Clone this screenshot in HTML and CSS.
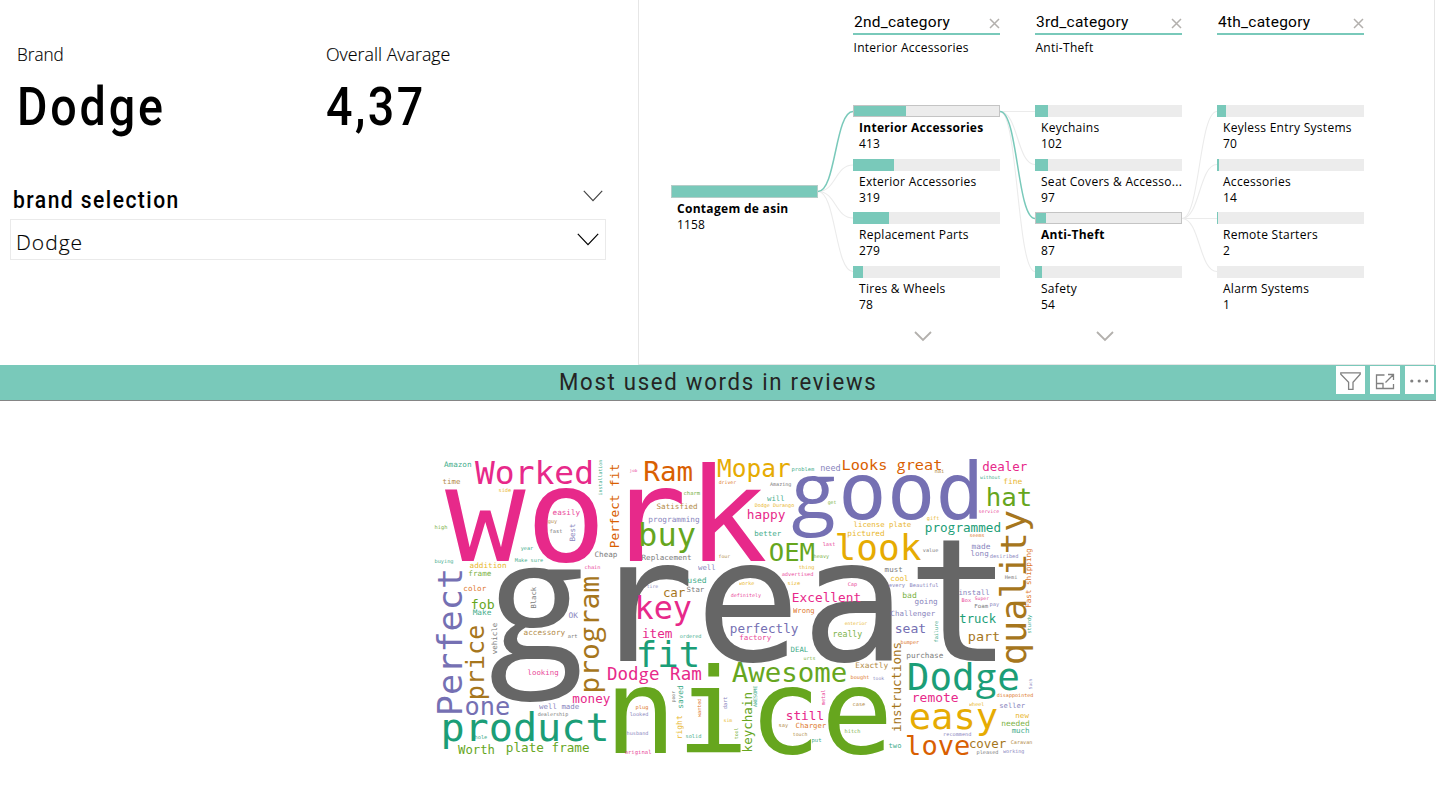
FILE: index.html
```html
<!DOCTYPE html>
<html lang="en">
<head>
<meta charset="utf-8">
<title>Brand reviews</title>
<link rel="stylesheet" href="styles.css">
</head>
<body>
<main class="page">
  <section class="top">
    <div class="summary">
      <div class="cards">
        <div class="card"><div class="card-label"><span class="fit-brand">Brand</span></div><div class="card-value">Dodge</div></div>
        <div class="card"><div class="card-label"><span class="fit-overall">Overall Avarage</span></div><div class="card-value number">4,37</div></div>
      </div>
      <div class="slicer">
        <div class="slicer-head"><span class="slicer-title">brand selection</span>
          <svg class="chev" width="20" height="12" viewBox="0 0 20 12"><path d="M.8.8 10 10.6 19.2.8"/></svg></div>
        <div class="slicer-box"><span class="slicer-value">Dodge</span>
          <svg class="chev dark" width="22" height="13" viewBox="0 0 22 13"><path d="M.8.8 11 11.6 21.2.8"/></svg></div>
      </div>
    </div>
    <div class="tree">
      <svg class="links" width="796" height="364" viewBox="639 0 796 364">
        <path d="M818 191.500C836 191.500 835 165 853 165"/>
        <path d="M818 191.500C836 191.500 835 218 853 218"/>
        <path d="M818 191.500C836 191.500 835 271.500 853 271.500"/>
        <path d="M1000 111.500H1035"/>
        <path d="M1000 111.500C1018 111.500 1017 164.500 1035 164.500"/>
        <path d="M1000 111.500C1018 111.500 1017 271.500 1035 271.500"/>
        <path d="M1182 218.500C1200 218.500 1199 111.500 1217 111.500"/>
        <path d="M1182 218.500C1200 218.500 1199 164.500 1217 164.500"/>
        <path d="M1182 218.500H1217"/>
        <path d="M1182 218.500C1200 218.500 1199 271.500 1217 271.500"/>
        <path class="on" d="M818 191.500C836 191.500 835 111.500 853 111.500"/>
        <path class="on" d="M1000 111.500C1018 111.500 1017 218.500 1035 218.500"/>
      </svg>
      <div class="root">
        <div class="bar full"></div>
        <div class="name bold">Contagem de asin</div><div class="num">1158</div>
      </div>
      <div class="level">
        <div class="level-head"><span>2nd_category</span><svg width="11" height="11" viewBox="0 0 11 11"><path d="m1 1 9 9m0-9-9 9"/></svg></div>
        <div class="picked">Interior Accessories</div>
        <div class="nodes">
          <div class="node"><div class="bar sel"><i style="width:52.500px"></i></div><div class="name bold">Interior Accessories</div><div class="num">413</div></div>
          <div class="node"><div class="bar"><i style="width:40.500px"></i></div><div class="name">Exterior Accessories</div><div class="num">319</div></div>
          <div class="node"><div class="bar"><i style="width:35.500px"></i></div><div class="name">Replacement Parts</div><div class="num">279</div></div>
          <div class="node"><div class="bar"><i style="width:10px"></i></div><div class="name">Tires &amp; Wheels</div><div class="num">78</div></div>
        </div>
        <svg class="more" width="18" height="11" viewBox="0 0 18 11"><path d="m1 1 8 8 8-8"/></svg>
      </div>
      <div class="level">
        <div class="level-head"><span>3rd_category</span><svg width="11" height="11" viewBox="0 0 11 11"><path d="m1 1 9 9m0-9-9 9"/></svg></div>
        <div class="picked">Anti-Theft</div>
        <div class="nodes">
          <div class="node"><div class="bar"><i style="width:13px"></i></div><div class="name">Keychains</div><div class="num">102</div></div>
          <div class="node"><div class="bar"><i style="width:12.500px"></i></div><div class="name">Seat Covers &amp; Accesso...</div><div class="num">97</div></div>
          <div class="node"><div class="bar sel"><i style="width:11px"></i></div><div class="name bold">Anti-Theft</div><div class="num">87</div></div>
          <div class="node"><div class="bar"><i style="width:7px"></i></div><div class="name">Safety</div><div class="num">54</div></div>
        </div>
        <svg class="more" width="18" height="11" viewBox="0 0 18 11"><path d="m1 1 8 8 8-8"/></svg>
      </div>
      <div class="level">
        <div class="level-head"><span>4th_category</span><svg width="11" height="11" viewBox="0 0 11 11"><path d="m1 1 9 9m0-9-9 9"/></svg></div>
        <div class="picked"></div>
        <div class="nodes">
          <div class="node"><div class="bar"><i style="width:9px"></i></div><div class="name">Keyless Entry Systems</div><div class="num">70</div></div>
          <div class="node"><div class="bar"><i style="width:2px"></i></div><div class="name">Accessories</div><div class="num">14</div></div>
          <div class="node"><div class="bar"><i style="width:.3px"></i></div><div class="name">Remote Starters</div><div class="num">2</div></div>
          <div class="node"><div class="bar"></div><div class="name">Alarm Systems</div><div class="num">1</div></div>
        </div>
      </div>
    </div>
  </section>
  <header class="banner">
    <h1><span>Most used words in reviews</span></h1>
    <div class="tools">
      <span class="tool"><svg width="29" height="28" viewBox="0 0 29 28"><path d="M4.800 6.800H24.200V8.300L17 16.300V23.300H12.600V16.300L4.800 8.300Z"/></svg></span>
      <span class="tool"><svg width="30" height="28" viewBox="0 0 30 28"><path d="M14.500 9H6.500V22.500H23.500V18M6.500 17.500H13V22.500M15.500 16.500 23 9M18 8.500H23.500V14"/></svg></span>
      <span class="tool"><svg width="29" height="28" viewBox="0 0 29 28"><g class="dots"><circle cx="6.800" cy="15" r="1.600"/><circle cx="14.200" cy="15" r="1.600"/><circle cx="21.600" cy="15" r="1.600"/></g></svg></span>
    </div>
  </header>
  <section class="cloud"><svg id="cloud" width="604" height="304" viewBox="432 455 604 304"></svg></section>
</main>
<script src="cloud.js"></script>
</body>
</html>
```
FILE: styles.css
```css
* { box-sizing: border-box; }
body { margin: 0; background: #fff; color: #000; font-family: "Open Sans", "Noto Sans", sans-serif; }
.page { width: 1436px; height: 796px; overflow: hidden; display: flex; flex-direction: column; }
.top { display: flex; height: 365px; }
.summary { width: 638px; padding: 42px 0 0 10px; }
.cards { display: flex; padding-left: 7px; height: 143px; }
.card { width: 309px; }
.card-label { font-size: 18px; line-height: 25px; font-weight: 300; white-space: nowrap; -webkit-text-stroke: .15px #000; }
.card-label span { display: inline-block; transform-origin: 0 50%; }
.fit-brand { transform: scaleX(.95); }
.fit-overall { transform: scaleX(.99); }
.card-value { font: 500 53px/64px Roboto, sans-serif; margin-top: 8px; letter-spacing: 3.2px; transform: scaleX(.88); transform-origin: 0 50%; }
.card-value.number { letter-spacing: 2.800px; }
.slicer { width: 596px; }
.slicer-head { display: flex; justify-content: space-between; align-items: center; height: 34px; padding: 0 3px; font: 500 23px/34px Roboto, sans-serif; }
.slicer-title { margin-top: -3px; letter-spacing: 1.600px; transform: scaleX(.915); transform-origin: 0 50%; }
.slicer-head .chev { margin-top: -13px; }
.slicer-box { display: flex; justify-content: space-between; align-items: center; height: 41px; border: 1px solid #eaeaea; padding: 0 6px 0 5px; }
.slicer-value { font-size: 21px; font-weight: 300; line-height: 30px; padding-top: 5px; letter-spacing: 1px; -webkit-text-stroke: .15px #000; }
.slicer-box .chev { margin-top: -1px; }
.chev { fill: none; stroke: #444; stroke-width: 1.2; }
.chev.dark { stroke: #000; }
.tree { position: relative; width: 797px; border: 1px solid #e6e6e6; border-top: 0; display: flex; padding-left: 32px; }
.links { position: absolute; left: 0; top: 0; fill: none; stroke: #ebebeb; stroke-width: 1.1; }
.links .on { stroke: #79c9ba; stroke-width: 1.5; }
.root { width: 147px; margin-right: 35px; padding-top: 185px; }
.level { width: 147px; margin-right: 35px; display: flex; flex-direction: column; }
.level:last-child { margin-right: 0; }
.level-head { height: 35px; padding: 9px 0 0 1px; border-bottom: 2px solid #79c9ba; display: flex; justify-content: space-between; font: 15.500px/26px Roboto, sans-serif; letter-spacing: .25px; }
.level-head svg { margin-top: 9px; fill: none; stroke: #b3b0ad; stroke-width: 1.5; }
.picked { height: 70px; font-size: 12px; line-height: 25px; letter-spacing: .28px; padding-left: .5px; }
.node { height: 53.500px; font-size: 12px; }
.bar { width: 146.500px; height: 12px; background: #ececec; display: flex; }
.bar i { display: block; height: 100%; background: #79c9ba; }
.bar.sel { outline: 1px solid #c4c4c4; outline-offset: -1px; }
.bar.full { width: 147px; height: 13px; background: #79c9ba; border: 1px solid #b5cdc8; }
.name { font-size: 12px; line-height: 16px; padding: 3px 0 0 6px; white-space: nowrap; letter-spacing: .28px; }
.name.bold { font-weight: 700; letter-spacing: .3px; }
.num { font-size: 12px; line-height: 16px; padding-left: 6px; letter-spacing: .15px; }
.more { margin: 12px 0 0 61px; fill: none; stroke: #b3b0ad; stroke-width: 1.8; }
.banner { height: 36px; background: #79c9ba; border-bottom: 1px solid #858585; display: grid; grid-template-columns: 1fr auto; }
.banner h1 { margin: 0; grid-column: 1 / 3; grid-row: 1; text-align: center; font: 400 24px/35px Roboto, sans-serif; letter-spacing: 1.850px; color: #252423; }
.banner h1 span { display: inline-block; transform: scaleX(.925); }
.tools { grid-column: 2; grid-row: 1; display: flex; gap: 5px; padding: 1px 2px 0 0; }
.tool { height: 28px; background: #fff; }
.tool svg { display: block; fill: none; stroke: #808080; stroke-width: 1.3; }
.tool .dots { fill: #808080; stroke: none; }
.cloud { padding: 54px 0 0 432px; }
.cloud svg { display: block; overflow: visible; }
.cloud text { font-family: "DejaVu Sans Mono", monospace; }
.cloud .round-g { font-family: "Open Sans", "Noto Sans", sans-serif; }
```
FILE: cloud.js
```js
// Each word: text, ink start, ink end, baseline, colour; the vertical list runs bottom to top.
const C = { t: "#1b9e77", o: "#d95f02", p: "#7570b3", m: "#e7298a", g: "#66a61e", y: "#e6ab02", b: "#a6761d", k: "#666666" };
const across = [
["great",494,996,661,"k"],["work",445,766,561,"m"],["nice",615,887,753,"g"],["good",794,977,519,"p"],
["Worked",475,591,484,"m"],["Ram",645,692,481,"o"],["Mopar",718,790,477,"y"],["Looks great",843,941,470,"o"],["dealer",983,1027,471,"m"],
["hat",988,1030,506,"g"],["look",837,921,560,"y"],["buy",641,695,546,"g"],["OEM",770,814,561,"g"],["programmed",926,1000,532,"t"],
["key",638,691,619,"m"],["fit",639,697,667,"t"],["Awesome",732,846,682,"g"],["Dodge",909,1018,690,"t"],["easy",911,997,729,"y"],
["love",907,969,755,"o"],["product",444,606,741,"t"],["one",466,509,715,"p"],["Dodge Ram",608,701,680,"m"],["money",573,610,703,"m"],
["plate frame",507,589,752,"g"],["Worth",458,494,754,"g"],["fob",472,494,609,"g"],["car",664,685,597,"b"],["Excellent",793,860,602,"m"],
["happy",748,785,519,"m"],["perfectly",731,798,633,"p"],["seat",896,925,633,"p"],["truck",960,996,623,"t"],["part",969,999,641,"b"],
["cover",970,1006,748,"b"],["remote",914,958,702,"m"],["still",787,823,720,"m"],["item",643,672,638,"m"],["Challenger",891,935,616,"p"],
["addition",470,506,568,"y"],["Amazon",444,471,467,"t"],["time",443,460,484,"b"],["frame",469,491,576,"g"],["color",464,486,591,"o"],["Cheap",595,617,557,"k"],
["easily",553,580,515,"m"],["side",499,511,492,"y"],["guy",548,557,523,"b"],["fast",550,562,533,"k"],["year",521,533,550,"t"],["Make sure",515,543,562,"t"],
["buying",435,453,563,"t"],["high",435,447,529,"g"],["chain",585,600,569,"m"],["Satisfied",657,697,509,"b"],["charm",684,700,495,"g"],
["programming",649,699,522,"p"],["Replacement",642,691,560,"k"],["driver",719,736,484,"o"],["problem",792,814,471,"t"],["need",821,840,471,"p"],["Amazing",770,791,486,"k"],
["will",767,784,501,"t"],["Dodge Durango",755,794,507,"y"],["better",755,781,536,"t"],["four",719,730,558,"b"],["well",698,715,570,"p"],
["thing",799,814,569,"y"],["used",688,706,583,"t"],["advertised",782,813,576,"m"],["Star",687,704,592,"k"],["tire",647,658,588,"p"],["worke",739,754,585,"y"],["size",788,800,585,"y"],
["definitely",731,761,597,"m"],["Wrong",793,814,613,"o"],["heavy",814,829,558,"g"],["last",823,835,546,"m"],["get",828,836,504,"g"],["job",630,637,472,"m"],
["nai",935,944,473,"b"],["without",980,1000,479,"t"],["fine",1004,1022,484,"y"],["service",979,999,513,"m"],["gift",927,939,520,"y"],
["license plate",854,911,527,"y"],["pictured",848,884,536,"y"],["seems",970,984,537,"o"],["made",972,990,549,"p"],["long",971,988,556,"p"],["desiribed",990,1018,558,"p"],
["value",923,938,552,"k"],["must",885,902,572,"k"],["cool",891,908,581,"y"],["Cap",848,857,586,"m"],["every",889,905,587,"p"],["Beautiful",910,938,587,"p"],
["install",959,989,595,"p"],["bad",903,916,598,"g"],["going",915,937,604,"p"],["Box",962,971,602,"m"],["Super",975,989,600,"m"],["Hemi",1005,1017,579,"k"],["Foam",975,988,608,"k"],["pay",990,999,606,"p"],
["Make",473,491,615,"t"],["OK",569,578,618,"p"],["accessory",524,565,635,"b"],["art",568,577,638,"k"],["looking",528,558,675,"m"],["well made",539,579,709,"p"],["dealership",538,568,716,"k"],["hole",475,487,739,"t"],
["ordered",680,701,638,"t"],["factory",740,771,640,"m"],["DEAL",791,808,652,"t"],["urts",804,815,660,"g"],["really",834,862,637,"g"],["enterior",845,867,625,"y"],
["bumper",901,919,644,"o"],["purchase",907,943,658,"k"],["Exactly",856,888,668,"b"],["bought",851,869,679,"o"],["took",873,884,680,"p"],["disappointed",997,1033,697,"o"],
["case",853,865,706,"b"],["wheel",969,984,706,"y"],["seller",1000,1025,708,"p"],["hitch",845,860,733,"g"],["new",1016,1029,718,"y"],["needed",1002,1029,726,"g"],["much",1012,1029,733,"t"],
["recommend",944,971,736,"p"],["two",889,901,748,"t"],["Caravan",1011,1032,744,"b"],["pleased",977,998,754,"k"],["working",1003,1024,753,"p"],
["plug",636,648,709,"o"],["looked",630,648,716,"p"],["husband",627,648,735,"p"],["original",625,651,754,"m"],["solid",686,701,738,"t"],["sim",724,732,722,"y"],
["say",779,788,727,"b"],["Charger",796,826,728,"o"],["touch",793,807,736,"b"],["put",812,821,742,"t"]];
const upright = [
["Perfect",713,571,462,"p"],["price",698,626,484,"b"],["program",691,577,599,"b"],["Perfect fit",547,465,619,"o"],["quality",663,511,1026,"b"],
["instructions",731,643,901,"b"],["keychain",751,693,752,"g"],["installation",495,460,602,"t"],["Best",541,524,575,"p"],["Black",608,587,536,"k"],
["vehicle",654,623,497,"k"],["Fast shipping",607,549,1031,"o"],["failure",642,621,938,"t"],["sturdy",633,615,1031,"t"],["Such",689,679,1032,"p"],
["saved",708,686,683,"t"],["poor",702,691,675,"k"],["wanted",717,699,701,"o"],["dart",709,697,727,"p"],["right",738,716,682,"y"],["tool",739,728,738,"g"],["AWESOME",707,686,757,"t"],["metal",705,690,825,"m"]];

const NS = "http://www.w3.org/2000/svg";
const ctx = document.createElement("canvas").getContext("2d");
ctx.font = '100px "DejaVu Sans Mono"';
const svg = document.getElementById("cloud");
function add(word, length, color, place) {
  const m = ctx.measureText(word);
  const size = length / (m.actualBoundingBoxLeft + m.actualBoundingBoxRight) * 100;
  const offset = m.actualBoundingBoxLeft * size / 100;
  const cell = size * 0.602;
  const el = document.createElementNS(NS, "text");
  // The double-storey g comes from a proportional face, centred in its monospace cell.
  if (size > 11 && word.includes("g")) {
    let at = 0;
    for (const part of word.split(/(g)/)) {
      if (!part) continue;
      const run = document.createElementNS(NS, "tspan");
      run.textContent = part;
      const isG = part === "g";
      if (isG) run.setAttribute("class", "round-g");
      run.setAttribute("x", (at * cell + (isG ? size * 0.03 : 0)).toFixed(2));
      el.appendChild(run);
      at += part.length;
    }
  } else {
    el.textContent = word;
  }
  el.setAttribute("fill", C[color]);
  el.setAttribute("font-size", size.toFixed(2));
  el.setAttribute("transform", place(offset) + " scale(1 .975)");
  if (size < 12) el.setAttribute("opacity", ".85");
  svg.appendChild(el);
}
for (const [w, a, b, base, c] of across) add(w, b - a, c, o => `translate(${a + o} ${base})`);
for (const [w, a, b, base, c] of upright) add(w, a - b, c, o => `translate(${base} ${a - o}) rotate(-90)`);
```
